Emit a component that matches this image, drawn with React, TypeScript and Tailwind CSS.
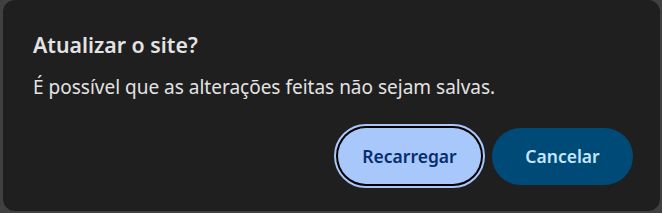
import React from "react";

export default function App() {
  return (
    <div className="w-[662px] h-[213px] bg-[#404040] pl-[3px] pr-[2px] pb-[2px] font-['Noto_Sans',sans-serif]">
      <div className="h-full rounded-[12px] bg-[#1f1f1f] pl-[30px] pr-[27px] pt-[29px] flex flex-col">
        <h1 className="text-[21.3px] leading-[32px] font-semibold text-[#e3e3e3]">Atualizar o site?</h1>
        <p className="mt-[14px] text-[19px] leading-[24px] text-[#e3e3e3]">
          É possível que as alterações feitas não sejam salvas.
        </p>
        <div className="mt-auto mb-[26px] flex justify-end gap-[11px]">
          <button className="w-[143px] h-[56px] rounded-full bg-[#a8c7fa] text-[#062e6f] text-[17.5px] font-semibold ring-2 ring-black outline-2 outline-offset-2 outline-[#a8c7fa]">
            Recarregar
          </button>
          <button className="w-[141px] h-[57px] rounded-full bg-[#004a77] text-[#c2e7ff] text-[17.5px] font-semibold">
            Cancelar
          </button>
        </div>
      </div>
    </div>
  );
}
